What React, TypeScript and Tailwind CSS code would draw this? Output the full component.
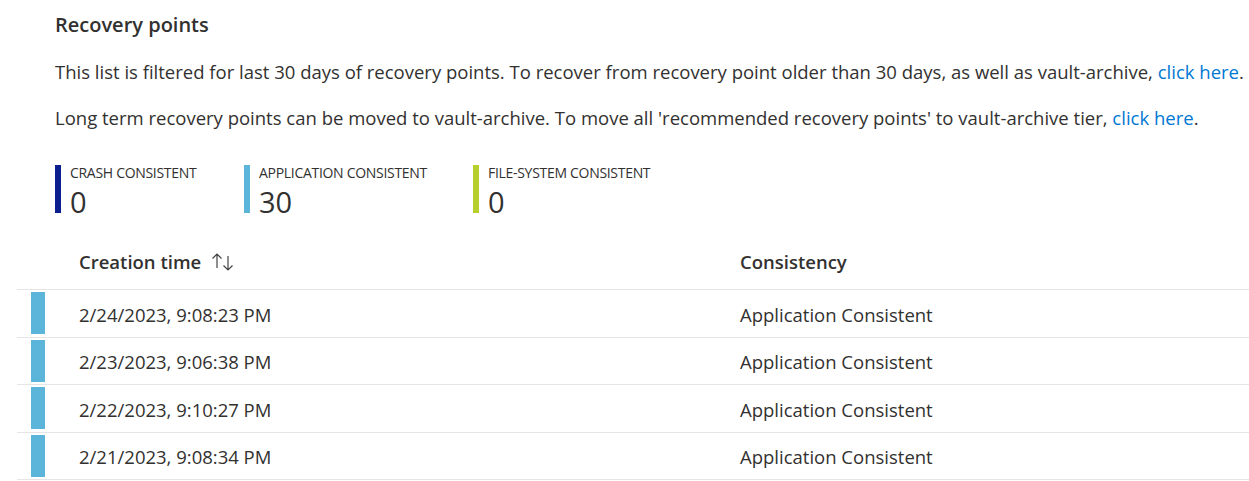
const rows = [
  "2/24/2023, 9:08:23 PM",
  "2/23/2023, 9:06:38 PM",
  "2/22/2023, 9:10:27 PM",
  "2/21/2023, 9:08:34 PM",
];

const legend = [
  { label: "CRASH CONSISTENT", value: "0", bar: "bg-[#0b1e8e]", w: "w-[189px]" },
  { label: "APPLICATION CONSISTENT", value: "30", bar: "bg-[#5bb4d9]", w: "w-[229px]" },
  { label: "FILE-SYSTEM CONSISTENT", value: "0", bar: "bg-[#b6cf2c]", w: "w-[200px]" },
];

const SortIcon = () => (
  <svg width="26" height="20" viewBox="0 0 26 20" fill="none" stroke="#444" strokeWidth="1.2">
    <path d="M6 16V2M1.5 6.5L6 2l4.5 4.5" />
    <path d="M17 4v14M12.5 13.5L17 18l4.5-4.5" />
  </svg>
);

const App = () => {
  return (
    <div className="w-[1249px] h-[481px] bg-white overflow-hidden font-['Open_Sans',sans-serif] text-[#323130]">
      <div className="pl-[55px] pt-[12px]">
        <h2 className="text-[20px] leading-[26px] font-semibold">Recovery points</h2>
        <p className="mt-[22px] text-[18.5px] leading-[24px] whitespace-nowrap">
          This list is filtered for last 30 days of recovery points. To recover from recovery point older than 30 days, as well as vault-archive,{" "}
          <a className="text-[#0078d4]">click here</a>.
        </p>
        <p className="mt-[22px] text-[18.5px] leading-[24px] whitespace-nowrap">
          Long term recovery points can be moved to vault-archive. To move all 'recommended recovery points' to vault-archive tier,{" "}
          <a className="text-[#0078d4]">click here</a>.
        </p>
        <div className="flex mt-[35px] h-[51px]">
          {legend.map((l) => (
            <div key={l.label} className={`flex items-start ${l.w}`}>
              <div className={`w-[6px] h-[48px] ${l.bar}`} />
              <div className="pl-[9px]">
                <div className="text-[14px] leading-[16px] tracking-[-0.3px]">{l.label}</div>
                <div className="mt-[7px] text-[29px] leading-[28px]">{l.value}</div>
              </div>
            </div>
          ))}
        </div>
      </div>
      <div className="mt-[26px] ml-[17px]">
        <div className="flex items-center h-[48px] pb-[8px] border-b border-[#e5e5e5] text-[18.5px] font-semibold">
          <div className="w-[723px] pl-[62px] flex items-center gap-[10px]">
            Creation time <SortIcon />
          </div>
          <div>Consistency</div>
        </div>
        {rows.map((r) => (
          <div key={r} className="flex items-center h-[47.5px] border-b border-[#e5e5e5] text-[18.5px]">
            <div className="w-[723px] flex items-center">
              <div className="ml-[14px] w-[14px] h-[42px] bg-[#5bb4d9]" />
              <div className="pl-[34px] pt-[3px]">{r}</div>
            </div>
            <div className="pt-[3px]">Application Consistent</div>
          </div>
        ))}
      </div>
    </div>
  );
};

export default App;
